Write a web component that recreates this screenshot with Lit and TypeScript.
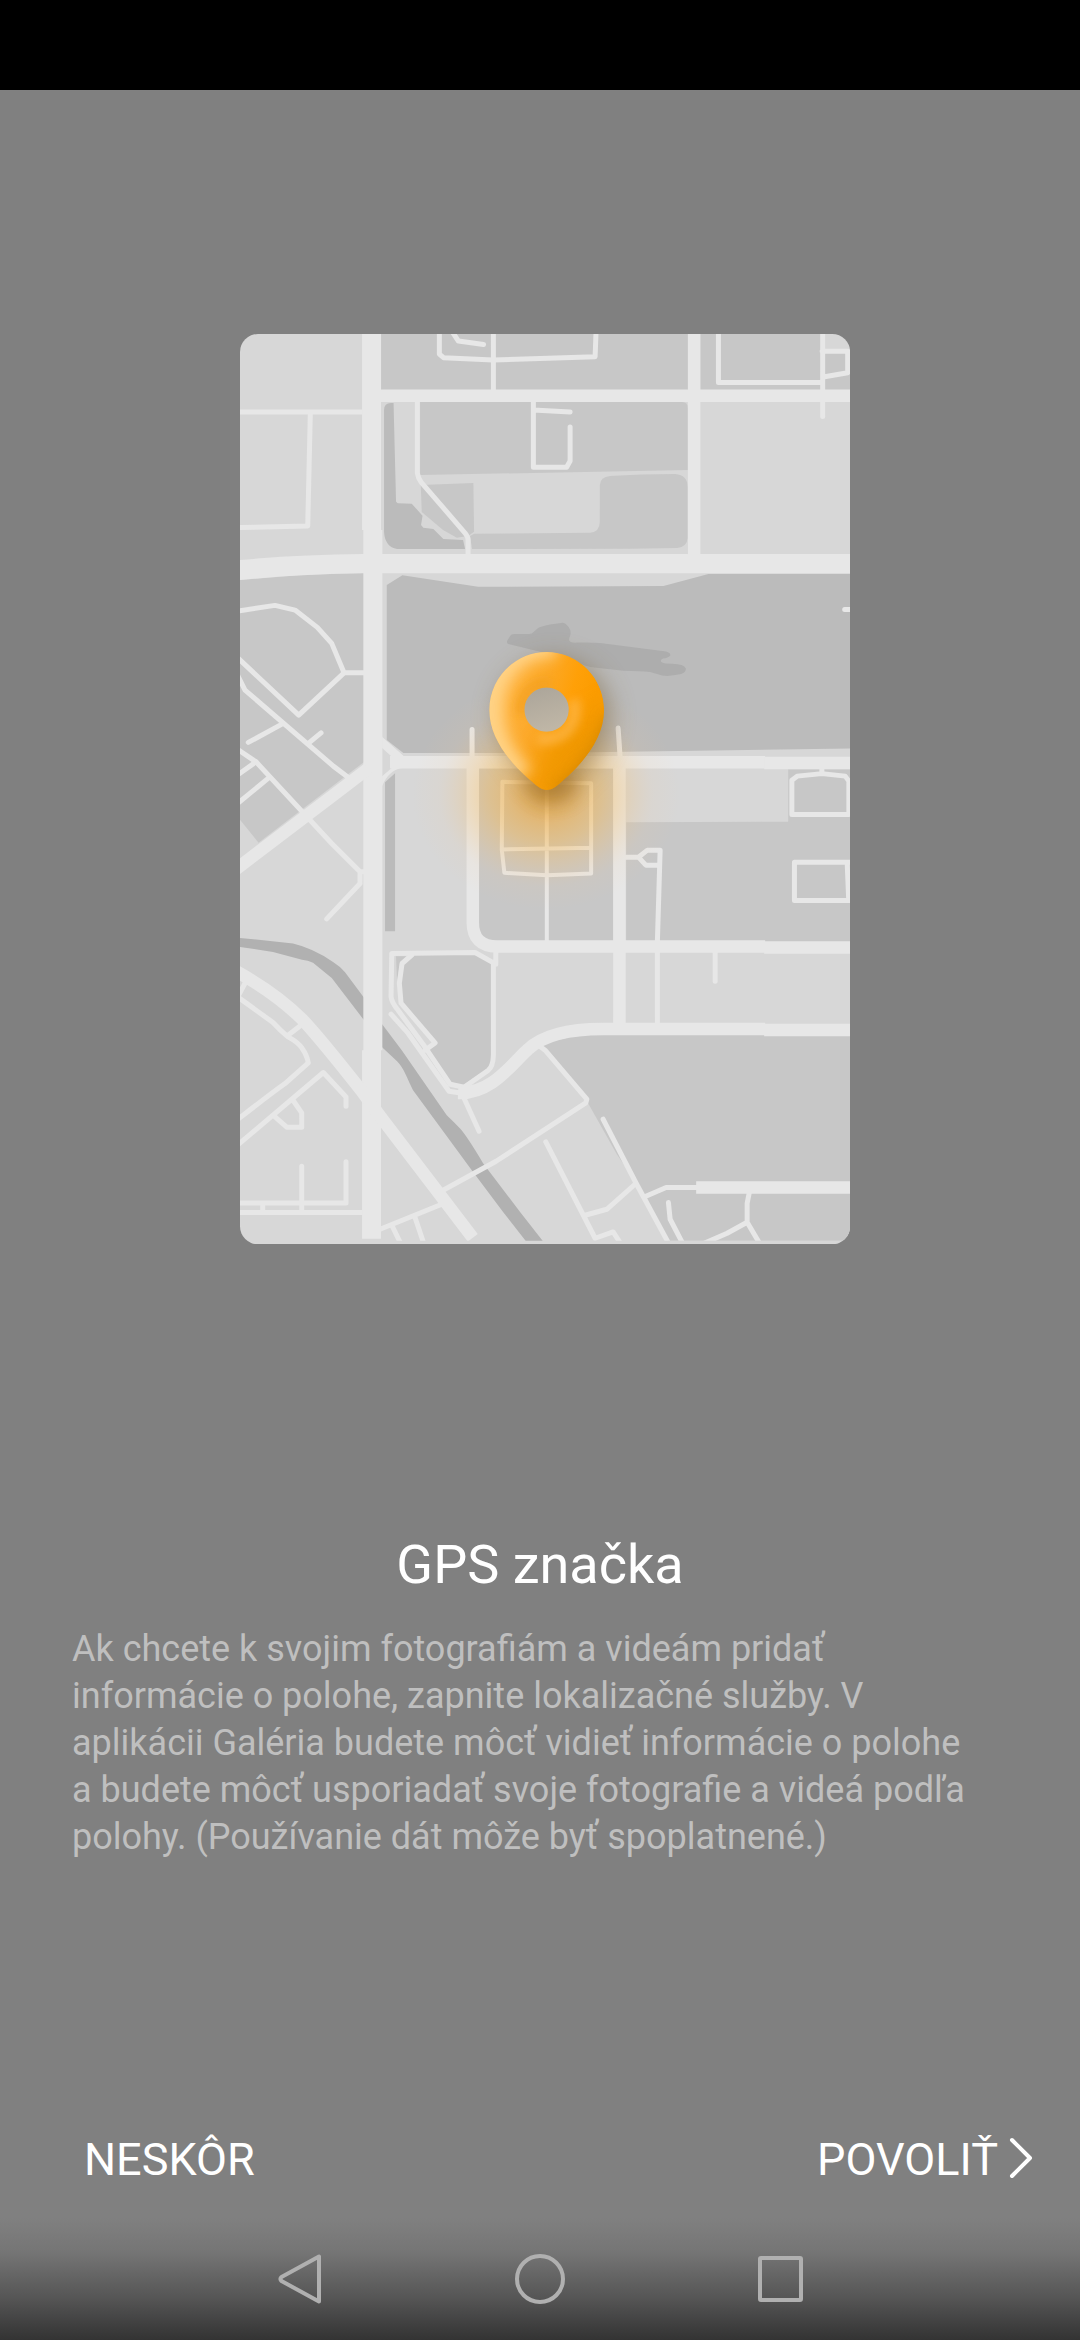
import { LitElement, html, css, svg } from "lit";
import { customElement } from "lit/decorators.js";

/** Illustrated city map with a glowing location pin. */
@customElement("location-map")
class LocationMap extends LitElement {
  static styles = css`
    :host {
      display: block;
    }
    .map {
      display: block;
      width: 100%;
      height: auto;
    }
    .block {
      fill: #c7c7c7;
    }
    .ground {
      fill: #d7d7d7;
    }
    .park {
      fill: #bbbbbb;
    }
    .lake {
      fill: #adadad;
    }
    .river {
      fill: #b1b1b1;
    }
    .road {
      fill: #e7e7e7;
    }
    .streets {
      fill: none;
      stroke: #e7e7e7;
      stroke-width: 5;
      stroke-linecap: round;
      stroke-linejoin: round;
    }
    .lanes {
      stroke-width: 4;
    }
    .avenues {
      fill: none;
      stroke: #e7e7e7;
      stroke-width: 12.5;
    }
  `;

  private areas() {
    return svg`
      <g class="block">
        <path d="M381 334H688V390H381Z M700 334H823V350H850V390H700Z" />
        <path d="M420 402H682Q687.7 402 687.7 408V470L420 475Z" />
        <path d="M420.7 485L473.3 483L474 531.7L468 536L456.7 537.7L443 530L421.7 512Z" />
        <path d="M470 536L474 533.7L590 532.7Q599.5 532 599.7 522V485Q600 477 610 476Q640 474 675 474Q687.5 475 687.5 487V538Q687 547 677 548L630 548.7L472 549Z" />
        <path d="M240 580L300 575L364 573V762L258.5 842.5L240 819.5Z" />
        <path d="M479 768H613V941H479Z" />
        <path d="M626 822L788 821.5V769H850V942H626Z" />
        <path d="M413 955L404 963L400 983L402 1003L435 1042L427 1051L451 1082L463 1085L491 1066L493.5 963L474 953Z" />
        <path d="M396 956H406L400 962L397 982Z" />
        <path d="M541 1045Q570 1034 603 1034H850V1240.5H668L636.7 1183L616.7 1154L588 1103L586 1098Z" />
      </g>
      <g class="park">
        <path d="M384 410Q384 403 391 403H393.5L396 501.7L397.7 503.3L411.7 503.7L422.5 515.7L421 525L423.3 527.7L433.3 529L443.3 539L463 540L465 549H397Q385 547 384 532Z" />
        <path d="M386.7 585L402.3 575.3L478 586.7L663.3 586L708.3 574H850V748.3L540 752.8H403.3L386.7 740Z" />
        <path d="M385 782L395 773V931H385Z" />
      </g>
      <path class="lake" d="M508.3 644Q506 643 507.5 640L510 636Q511 634 514 634H529Q531.7 634 534 631.5L538 628Q540 626.500 550 624.5L561 622.8Q565 622 568.500 627Q571.5 631 570 636Q568 640 570 641.500Q571 643 578 642.5Q590 642 600 643L666 651.500Q671 653 670 655.700Q668 658 663 658.500Q659 660 662 662.500Q664 663.700 672 663.700Q684 664 685.700 668.500Q686 672 681 674Q670 676.500 662 675.500L650 672Q640 671 623.300 670.700L590 667L540 651.700Z" />
      <g class="river">
        <path d="M240 937.7L293 943.3Q313 948 333 961.7Q340 966 345 972L364 997.500V1020L331.700 977.700L313 962.500Q308 960 302 959.500L273 951.700L240 946.700Z" />
        <path d="M381 1022.500L401.700 1050L446.700 1115Q453 1121 460 1128.300Q467 1136 483 1163L520 1211.700L542.700 1240.700H525.700L503 1211.700L471.700 1170L413 1090Q409 1082 406 1075Q402 1066 397 1061L381 1046Z" />
      </g>
    `;
  }

  private streets() {
    return svg`
      <g class="streets">
        <path d="M238 412H362 M310.300 413L307.700 526L238 527.500" />
        <path d="M417.300 401.700V473Q418 478 421 482L465 533Q468 537 468 540V556" />
        <path d="M439.300 330V354L443.500 357.700L493 360L540 358.500L595 356.700L596 330" />
        <path d="M451 330L458.300 341L483.500 344.500 M493.300 332V392" />
        <path d="M533.300 402V467.300H566.500L570 461V427 M533.300 410L570 412" />
        <path d="M718.300 332V382.500H822 M822.500 332V416.500 M822 351.300H847.500V372.700L823 377" />
        <path d="M238 610.900L275 605.300L295 610L317.300 627.300L331.700 643.300L344 672.700H364 M344 672.700L298.700 715L238 658" />
        <path d="M238 676L245 690L333.300 766L348 777 M283.300 723.300L248.300 742.300 M308.300 743.300L321 732.700" />
        <path d="M238 749.500L256 761.700L331.700 843.300L360 871.700V883.300L326.700 918.700 M360 871.700H366" />
        <path d="M256 761.700L238 774.500 M269.300 777.300L238 803" />
        <path d="M380 739L402 758 M472 729.500V757 M618 728L620 757 M852 609.300H844.500" />
        <path d="M821.700 768V773.500 M848.700 814.300H791.700V780L797 776L821.700 773.500L845 776L848.700 781V814.300" />
        <path d="M852 862H794.300V900.300H852 M847 862L848.500 900" />
        <path d="M626 857H638.300L647.300 850H660L657.300 940V1026 M638.300 857L645.700 865H659" />
        <path d="M715 948V981" />
        <path d="M495.700 950V964L475 952.300L391.700 953.300L391 996.700Q392 1003 398 1010L423 1044L450 1084L464 1087L488.300 1070Q493 1066 493.300 1055V963" />
        <path d="M411.700 955L402 963.300L399.300 983L401 1003L435 1042.700L425 1050" />
        <path d="M391 1014L408 1033L449 1091L462 1093 M464 1098L479 1131" />
        <path d="M245 983L238 996 M238 997L273 1022.300Q280 1030 288 1036.700Q298 1042 302 1048Q307 1055 308.300 1062.700L285 1083.300Q270 1094 238 1119 M288 1035L301 1025" />
        <path d="M238 1144.500L323.300 1072.300L346 1096.700V1106 M293 1100L301.700 1112.700V1127H286.700L273 1115" />
        <path d="M238 1202.700H346V1161.500 M301.700 1166V1212 M262.700 1203V1212 M238 1212.300H364" />
        <path d="M380 1229L441.700 1204 M392.300 1226L401 1244 M415 1217.300L424 1244" />
        <path d="M443 1190L496 1161L585.700 1102.700L586.700 1099L545 1050L541 1047" />
        <path d="M603 1119L636 1183L668.500 1243 M545.700 1141.700L595 1238L613 1231.700L621 1244 M585 1215L606.700 1209L636 1183" />
        <path d="M644 1196.700L666 1187.300H698 M668.300 1202.300L670 1219L683 1244 M749 1193L747 1203V1222L760 1244 M747 1222L727 1233L704 1243" />
        <path class="lanes" d="M502.300 781.700L591 783V873.300L546.700 875L504.300 872.700L501.700 849.300ZM501.700 849.300L591 847.700M546.700 783V941" />
      </g>
    `;
  }

  private avenues() {
    return svg`
      <path class="road" d="M362 334H381V530H382.300V1050H381V1238.500H362V1050H363.300V530H362Z" />
      <path class="road" d="M240 560Q300 554.500 363 554H850V573.300H363Q300 574 240 580Z" />
      <path class="road" d="M382 786Q389 769 403.500 767.500L392 767.500L382 776ZM382 736.700L403.500 756H391L382 748Z" />
      <g class="avenues">
        <path d="M381 395.800H850 M694 334V555" />
        <path d="M234 870.500L340 790L368 768.500 M390 762.200H765" />
        <path d="M764 762.800H850" />
        <path d="M472.700 762V922Q472.700 946.200 497 946.200H765 M764 947.200H850 M619.300 762V1026" />
        <path d="M458 1092.700C492 1094 512 1063 528 1049C545 1033 575 1028.800 603 1028.800H765 M764 1029.800H850 M696 1187.200H850" />
        <path d="M234 970Q275 992 302.500 1019.500Q320 1038 362.300 1091.700L380.700 1116.700L472.700 1237.500" />
      </g>
    `;
  }

  private pin() {
    const body =
      "M546.700 652C578.500 652 604 678 604 710C604 739 582 765 557 785.500Q546.700 794 536.500 785.500C511 765 489.300 739 489.300 710C489.300 678 515 652 546.700 652Z";
    const hole = "M546.500 687.300a22.200 22.200 0 1 0 .01 0Z";
    return svg`
      <ellipse cx="546" cy="794" rx="134" ry="116" fill="url(#glow)" />
      <path d=${body} transform="translate(7 6)" fill="#7a6238" opacity=".5" filter="url(#wide)" />
      <ellipse cx="550" cy="786" rx="26" ry="18" fill="#a06a18" opacity=".45" filter="url(#soft)" />
      <circle cx="546.500" cy="709.500" r="23" fill="url(#inside)" />
      <g clip-path="url(#pinShape)">
        <path d=${body + hole} fill="url(#body)" fill-rule="evenodd" />
        <g mask="url(#ring)">
          <path d="M548 740L520 800H620V700Z" fill="#ec9600" opacity=".75" filter="url(#wide)" />
          <path d="M556 658C524 656 503 680 503 708C503 735 515 752 532 770L470 800V630H556Z" fill="#ffd58c" opacity=".9" filter="url(#mid)" />
          <path d="M604 716C600 742 578 768 550 790L600 810L625 716Z" fill="#cf8400" opacity=".75" filter="url(#mid)" />
          <path d="M522 714A25 25 0 0 1 550 684" fill="none" stroke="#f09c18" stroke-width="11" opacity=".6" filter="url(#fine)" />
          <path d="M573 700A29 29 0 0 1 538 738" fill="none" stroke="#ffc268" stroke-width="12" opacity=".5" filter="url(#fine)" />
        </g>
      </g>
    `;
  }

  render() {
    return html`
      <svg class="map" viewBox="240 334 610 910" aria-hidden="true">
        <defs>
          <clipPath id="card"><rect x="240" y="334" width="610" height="910" rx="18" /></clipPath>
          <clipPath id="drawn"><rect x="240" y="334" width="610" height="906.500" /></clipPath>
          <clipPath id="pinShape">
            <path d="M546.700 652C578.500 652 604 678 604 710C604 739 582 765 557 785.500Q546.700 794 536.500 785.500C511 765 489.300 739 489.300 710C489.300 678 515 652 546.700 652Z" />
          </clipPath>
          <mask id="ring" maskUnits="userSpaceOnUse" x="480" y="640" width="140" height="160">
            <rect x="480" y="640" width="140" height="160" fill="#fff" />
            <circle cx="546.500" cy="709.500" r="22.200" fill="#000" />
          </mask>
          <radialGradient id="glow">
            <stop offset="0" stop-color="#f2a428" stop-opacity=".68" />
            <stop offset=".2" stop-color="#f4ab3a" stop-opacity=".6" />
            <stop offset=".42" stop-color="#f8b84e" stop-opacity=".44" />
            <stop offset=".62" stop-color="#fac068" stop-opacity=".24" />
            <stop offset=".8" stop-color="#f4c890" stop-opacity=".08" />
            <stop offset="1" stop-color="#f4c890" stop-opacity="0" />
          </radialGradient>
          <linearGradient id="inside" x1="0" y1="0" x2=".3" y2="1">
            <stop offset="0" stop-color="#aaa499" />
            <stop offset="1" stop-color="#bfb6a6" />
          </linearGradient>
          <linearGradient id="body" gradientUnits="userSpaceOnUse" x1="500" y1="690" x2="590" y2="715">
            <stop offset="0" stop-color="#ffb647" />
            <stop offset=".45" stop-color="#fca827" />
            <stop offset=".75" stop-color="#ffa008" />
            <stop offset="1" stop-color="#fb9c00" />
          </linearGradient>
          <filter id="wide" x="-50%" y="-50%" width="200%" height="200%">
            <feGaussianBlur stdDeviation="12" />
          </filter>
          <filter id="soft" x="-80%" y="-80%" width="260%" height="260%">
            <feGaussianBlur stdDeviation="9" />
          </filter>
          <filter id="mid" x="-50%" y="-50%" width="200%" height="200%">
            <feGaussianBlur stdDeviation="7" />
          </filter>
          <filter id="fine" x="-50%" y="-50%" width="200%" height="200%">
            <feGaussianBlur stdDeviation="4" />
          </filter>
        </defs>
        <g clip-path="url(#card)">
          <rect class="ground" x="240" y="334" width="610" height="910" />
          <g clip-path="url(#drawn)">${this.areas()} ${this.streets()} ${this.avenues()}</g>
        </g>
        ${this.pin()}
      </svg>
    `;
  }
}

@customElement("app-root")
class AppRoot extends LitElement {
  static styles = css`
    :host {
      display: block;
      font-family: Roboto, "Noto Sans", "Liberation Sans", sans-serif;
      color: #fff;
    }
    .screen {
      display: flex;
      flex-direction: column;
      min-height: 100vh;
      background: #808080;
    }
    .status {
      height: 90px;
      background: #000;
    }
    .content {
      flex: 1;
      display: flex;
      flex-direction: column;
    }
    .picture {
      width: 56.5%;
      margin: 244px auto 0;
      padding-left: 10px;
    }
    .title {
      margin: 289px 0 29px;
      font-size: 54px;
      line-height: 64px;
      font-weight: 400;
      text-align: center;
    }
    .text {
      margin: 0;
      padding: 0 96px 0 72px;
      font-size: 36px;
      line-height: 47px;
      color: #bfbfbf;
    }
    .actions {
      display: flex;
      justify-content: space-between;
      margin-top: auto;
      padding: 0 42px 30px 84px;
    }
    button {
      display: flex;
      align-items: center;
      justify-content: center;
      border: 0;
      padding: 0;
      background: none;
      color: inherit;
      font: inherit;
    }
    .action {
      gap: 8px;
      font-size: 45px;
      line-height: 56px;
    }
    .chevron {
      width: 32px;
      height: 48px;
    }
    .nav {
      display: grid;
      grid-template-columns: repeat(3, 1fr);
      height: 122px;
      padding: 0 16.6667%;
      background: linear-gradient(#808080, #757575 28%, #555 66%, #333);
    }
    .icon {
      width: 60px;
      height: 60px;
      fill: none;
      stroke: #b0b0b0;
      stroke-width: 4;
      stroke-linejoin: round;
    }
  `;

  render() {
    return html`
      <div class="screen">
        <div class="status"></div>
        <main class="content">
          <location-map class="picture"></location-map>
          <h1 class="title">GPS značka</h1>
          <p class="text">
            Ak chcete k svojim fotografiám a videám pridať informácie o polohe, zapnite lokalizačné služby. V aplikácii
            Galéria budete môcť vidieť informácie o polohe a budete môcť usporiadať svoje fotografie a videá podľa
            polohy. (Používanie dát môže byť spoplatnené.)
          </p>
          <div class="actions">
            <button class="action" type="button">NESKÔR</button>
            <button class="action" type="button">
              POVOLIŤ
              <svg class="chevron" viewBox="0 0 32 48" aria-hidden="true">
                <path
                  d="M6 4L24 22L6 40"
                  fill="none"
                  stroke="#fff"
                  stroke-width="4"
                  stroke-linecap="round"
                  stroke-linejoin="round"
                />
              </svg>
            </button>
          </div>
        </main>
        <nav class="nav">
          <button type="button" aria-label="Späť">
            <svg class="icon" viewBox="0 0 60 60"><path d="M49 7.500V52.500L11.500 32Q9.500 30 11.500 28Z" /></svg>
          </button>
          <button type="button" aria-label="Domov">
            <svg class="icon" viewBox="0 0 60 60"><circle cx="30" cy="30" r="23" /></svg>
          </button>
          <button type="button" aria-label="Nedávne">
            <svg class="icon" viewBox="0 0 60 60"><rect x="10" y="9" width="41" height="42" rx="1" /></svg>
          </button>
        </nav>
      </div>
    `;
  }
}
